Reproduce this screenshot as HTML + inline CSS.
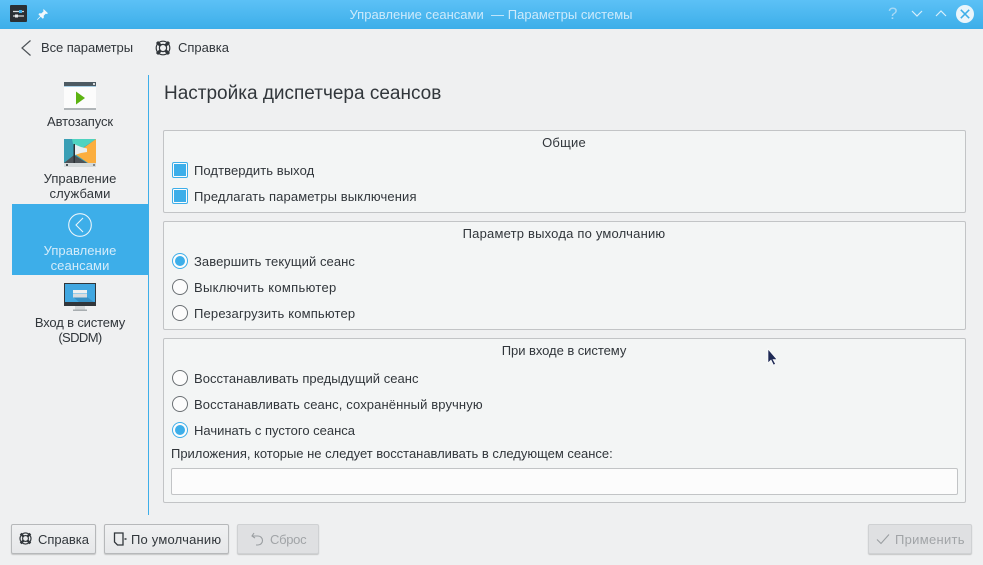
<!DOCTYPE html>
<html lang="ru"><head><meta charset="utf-8"><title>Управление сеансами</title>
<style>
html,body{margin:0;padding:0;width:983px;height:565px;overflow:hidden;background:#eff0f1}
body{position:relative;font-family:"Liberation Sans","Noto Sans CJK SC",sans-serif;font-size:13px;color:#31363b}
.t{position:absolute;white-space:nowrap;line-height:16px;height:16px}
.c{text-align:center;transform:translateX(-50%)}
.box{position:absolute;background:#f3f5f5;border:1px solid #c2c4c6;border-radius:2px;box-sizing:border-box}
.cb{position:absolute;left:172px;width:16px;height:16px;box-sizing:border-box;border:1px solid #3daee9;border-radius:2px;background:#fcfcfc}
.cb i{position:absolute;left:1px;top:1px;width:12px;height:12px;background:#3daee9}
.rb{position:absolute;left:172px;width:16px;height:16px;box-sizing:border-box;border:1px solid #6b7074;border-radius:50%;background:#fcfcfc}
.rb.on{border-color:#3daee9}
.rb.on i{position:absolute;left:2px;top:2px;width:10px;height:10px;border-radius:50%;background:#3daee9}
.btn{position:absolute;top:524px;height:30px;box-sizing:border-box;border:1px solid #b6b8ba;border-radius:2px;background:linear-gradient(#f0f1f2,#e6e7e9);box-shadow:0 1px 1px rgba(0,0,0,.18)}
.btn.d{background:#dfe0e2;border-color:#cfd1d3}
svg{position:absolute;overflow:visible}
</style></head><body>

<div style="position:absolute;left:0;top:0;width:983px;height:29px;background:linear-gradient(#5cc1f6,#3caee9)"></div>
<svg style="left:10px;top:5px" width="17" height="17" viewBox="0 0 17 17"><rect width="17" height="17" fill="#2b3034" rx="1"/><path d="M3 6.500h11M3 11h11" stroke="#d5d9db" stroke-width="1.300"/><rect x="9" y="5" width="3" height="3" fill="#3daee9"/><rect x="5" y="9.500" width="3" height="3" fill="#e8eaeb"/></svg>
<svg style="left:36px;top:8px" width="13" height="13" viewBox="0 0 13 13"><path d="M7.500 1l4.500 4.300-1.200.700-1-.4-2.100 2.200.1 2-1 1L4.700 8.700 1.500 12l-.5-.5 3.200-3.300L2.400 6.300l1-1 2 .1 2.200-2.100-.4-1z" fill="#f2f8fc"/></svg>
<div class="t c" style="left:491px;top:7px;color:#cdeafb;letter-spacing:.02px">Управление сеансами &nbsp;— Параметры системы</div>
<div class="t" style="left:888px;top:6px;font-size:17px;color:#a8d9f5">?</div>
<svg style="left:911px;top:9px" width="12" height="9"><path d="M1 2l5 5 5-5" fill="none" stroke="#d8effb" stroke-width="1.200"/></svg>
<svg style="left:935px;top:9px" width="12" height="9"><path d="M1 7l5-5 5 5" fill="none" stroke="#d8effb" stroke-width="1.200"/></svg>
<svg style="left:956px;top:5px" width="18" height="18"><circle cx="9" cy="9" r="9" fill="#eaf5fb"/><path d="M4.800 4.800l8.400 8.400M13.200 4.800l-8.400 8.400" stroke="#3daee9" stroke-width="1.500"/></svg>

<svg style="left:20px;top:39px" width="12" height="18"><path d="M10.500 1.500L2 9l8.500 7.500" fill="none" stroke="#4d5257" stroke-width="1.200"/></svg>
<div class="t" style="left:41px;top:40px;letter-spacing:-.08px">Все параметры</div>
<svg style="left:155px;top:40px" width="16" height="16" viewBox="0 0 16 16"><circle cx="8" cy="8" r="6.800" fill="none" stroke="#31363b" stroke-width="1.200"/><circle cx="8" cy="8" r="3.600" fill="none" stroke="#31363b" stroke-width="1.200"/><path d="M2 2l3.400 3.400M14 2l-3.400 3.400M2 14l3.400-3.400M14 14l-3.400-3.400" stroke="#31363b" stroke-width="3"/></svg>
<div class="t" style="left:178px;top:40px">Справка</div>

<div style="position:absolute;left:148px;top:75px;width:1px;height:440px;background:#3daee9"></div>
<div style="position:absolute;left:12px;top:204px;width:136px;height:71px;background:#3daee9"></div>

<svg style="left:64px;top:82px" width="32" height="28" viewBox="0 0 32 28"><rect width="32" height="28" fill="#fcfcfc"/><rect width="32" height="4" fill="#4d5a62"/><rect y="4" width="32" height="1" fill="#a9cfe5"/><rect x="29" y="1" width="2" height="2" fill="#d8dcdf"/><rect y="26" width="32" height="2" fill="#b0b5b8"/><path d="M12 9.500l9 6.500-9 6.500z" fill="#5cb311"/></svg>
<div class="t c" style="left:80px;top:114px;letter-spacing:-.1px">Автозапуск</div>

<svg style="left:64px;top:139px" width="32" height="28" viewBox="0 0 32 28"><rect width="32" height="24" fill="#3a9fb5"/><path d="M8 0H32L11 14z" fill="#4fd3c0"/><path d="M32 0v24H24L11 15z" fill="#fbae3f"/><path d="M0 24l10-8 13 8z" fill="#4d5358"/><rect y="24" width="32" height="4" fill="#d5dadb"/><rect x="2" y="25" width="2" height="2" fill="#4d5358"/><rect x="29" y="25" width="2" height="2" fill="#7f8488"/><rect x="9.500" y="5" width="1.500" height="19" fill="#2b3034"/><path d="M11 5.500l6 2.500 6 1.500v3.500l-6 1-6 2z" fill="#e8eef0"/></svg>
<div class="t c" style="left:80px;top:171px;letter-spacing:.05px">Управление</div>
<div class="t c" style="left:80px;top:186px;letter-spacing:.1px">службами</div>

<svg style="left:68px;top:213px" width="24" height="24"><circle cx="12" cy="12" r="11.300" fill="none" stroke="#eaf5fb" stroke-width="1.100"/><path d="M15 5l-7 7 7 7" fill="none" stroke="#eaf5fb" stroke-width="1.100"/></svg>
<div class="t c" style="left:80px;top:243px;color:#d4ecfa;letter-spacing:.05px">Управление</div>
<div class="t c" style="left:80px;top:258px;color:#d4ecfa;letter-spacing:.1px">сеансами</div>

<svg style="left:64px;top:283px" width="32" height="28" viewBox="0 0 32 28"><rect width="32" height="23" fill="#31363b"/><rect x="1" y="1" width="30" height="18" fill="#41a7e1"/><path d="M9 14h14l7 5H15z" fill="#2f7dae" opacity=".55"/><rect x="9" y="7" width="14" height="3.500" fill="#eff0f1"/><rect x="9" y="11" width="14" height="3.500" fill="#d8dcdf"/><rect x="11" y="23" width="10" height="3.500" fill="#d4d7d9"/><rect x="9" y="26.500" width="14" height="1.500" fill="#a8adb0"/></svg>
<div class="t c" style="left:80px;top:315px;letter-spacing:-.15px">Вход в систему</div>
<div class="t c" style="left:80px;top:330px;letter-spacing:-.6px">(SDDM)</div>

<div class="t" style="left:164px;top:82px;font-size:19px;height:24px;line-height:24px">Настройка диспетчера сеансов</div>

<div class="box" style="left:163px;top:130px;width:803px;height:83px"></div>
<div class="t c" style="left:564px;top:135px;letter-spacing:.2px">Общие</div>
<div class="cb" style="top:162px"><i></i></div>
<div class="t" style="left:194px;top:163px;letter-spacing:.07px">Подтвердить выход</div>
<div class="cb" style="top:188px"><i></i></div>
<div class="t" style="left:194px;top:189px;letter-spacing:.12px">Предлагать параметры выключения</div>

<div class="box" style="left:163px;top:221px;width:803px;height:109px"></div>
<div class="t c" style="left:564px;top:226px;letter-spacing:.2px">Параметр выхода по умолчанию</div>
<div class="rb on" style="top:253px"><i></i></div>
<div class="t" style="left:194px;top:254px;letter-spacing:.08px">Завершить текущий сеанс</div>
<div class="rb" style="top:279px"></div>
<div class="t" style="left:194px;top:280px;letter-spacing:.3px">Выключить компьютер</div>
<div class="rb" style="top:305px"></div>
<div class="t" style="left:194px;top:306px;letter-spacing:.17px">Перезагрузить компьютер</div>

<div class="box" style="left:163px;top:338px;width:803px;height:165px"></div>
<div class="t c" style="left:564px;top:343px;letter-spacing:-.05px">При входе в систему</div>
<div class="rb" style="top:370px"></div>
<div class="t" style="left:194px;top:371px;letter-spacing:.03px">Восстанавливать предыдущий сеанс</div>
<div class="rb" style="top:396px"></div>
<div class="t" style="left:194px;top:397px;letter-spacing:.11px">Восстанавливать сеанс, сохранённый вручную</div>
<div class="rb on" style="top:422px"><i></i></div>
<div class="t" style="left:194px;top:423px">Начинать с пустого сеанса</div>
<div class="t" style="left:171px;top:446px;letter-spacing:-.02px">Приложения, которые не следует восстанавливать в следующем сеансе:</div>
<div style="position:absolute;left:171px;top:468px;width:787px;height:27px;box-sizing:border-box;background:#fcfcfc;border:1px solid #c2c4c6;border-radius:2px"></div>

<svg style="left:765px;top:347px" width="14" height="20" viewBox="0 0 14 20"><path d="M3 2v14l3-3 2.500 5 2-1-2.500-4.500h4z" fill="#1f2a55" stroke="#fff" stroke-width=".6"/></svg>

<div class="btn" style="left:11px;width:85px"></div>
<svg style="left:19px;top:532px" width="13" height="13" viewBox="0 0 16 16"><circle cx="8" cy="8" r="6.800" fill="none" stroke="#31363b" stroke-width="1.400"/><circle cx="8" cy="8" r="3.600" fill="none" stroke="#31363b" stroke-width="1.400"/><path d="M2 2l3.400 3.400M14 2l-3.400 3.400M2 14l3.400-3.400M14 14l-3.400-3.400" stroke="#31363b" stroke-width="3"/></svg>
<div class="t" style="left:38px;top:532px">Справка</div>

<div class="btn" style="left:104px;width:125px"></div>
<svg style="left:113px;top:532px" width="14" height="14"><path d="M1.500 1h8.500v12H4.500l-3-3z" fill="none" stroke="#31363b" stroke-width="1.300"/><path d="M11.500 7h2" stroke="#31363b" stroke-width="1.500"/></svg>
<div class="t" style="left:131px;top:532px;letter-spacing:.2px">По умолчанию</div>

<div class="btn d" style="left:237px;width:82px"></div>
<svg style="left:251px;top:532px" width="13" height="14"><path d="M3 1L1 4l3 2M1.500 4H7a4.500 4.500 0 1 1 0 9H5" fill="none" stroke="#9a9ea1" stroke-width="1.100"/></svg>
<div class="t" style="left:270px;top:532px;color:#a1a4a7;letter-spacing:-.3px">Сброс</div>

<div class="btn d" style="left:868px;width:104px"></div>
<svg style="left:876px;top:533px" width="14" height="12"><path d="M1 6.500l4 4 8-9" fill="none" stroke="#9a9ea1" stroke-width="1.100"/></svg>
<div class="t" style="left:895px;top:532px;color:#a1a4a7;letter-spacing:.3px">Применить</div>

</body></html>
